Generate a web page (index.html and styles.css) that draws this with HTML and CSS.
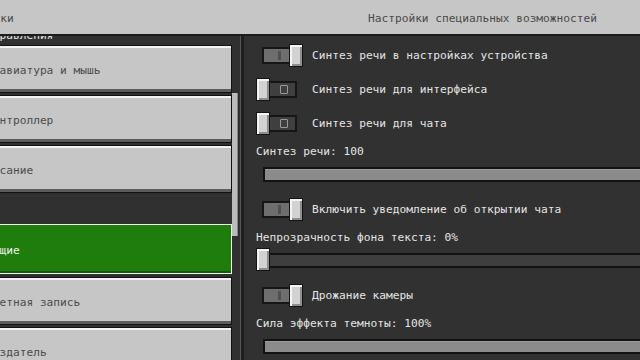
FILE: index.html
```html
<!DOCTYPE html>
<html lang="ru">
  <head>
    <meta charset="UTF-8" />
    <meta name="viewport" content="width=device-width, initial-scale=1.0" />
    <title>Настройки специальных возможностей</title>
    <link rel="stylesheet" href="styles.css">
  </head>
  <body>
    <div class="header">
      <span class="header-back">Настройки</span>
      <span class="header-title">Настройки специальных возможностей</span>
    </div>
    <div class="main">
      <div class="sidebar">
        <div class="side-list">
          <div class="side-label">Управления</div>
          <div class="side-btn">Клавиатура и мышь</div>
          <div class="side-btn">Контроллер</div>
          <div class="side-btn">Касание</div>
          <div class="side-gap"></div>
          <div class="side-btn selected">Общие</div>
          <div class="side-btn">Учетная запись</div>
          <div class="side-btn">Создатель</div>
        </div>
        <div class="scrollbar">
          <div class="scroll-thumb"></div>
        </div>
      </div>
      <div class="divider"></div>
      <div class="content">
        <div class="row">
          <div class="toggle on"><div class="track"></div><span class="mark"></span><div class="knob"></div></div>
          <span>Синтез речи в настройках устройства</span>
        </div>
        <div class="row">
          <div class="toggle off"><div class="track"></div><span class="mark"></span><div class="knob"></div></div>
          <span>Синтез речи для интерфейса</span>
        </div>
        <div class="row">
          <div class="toggle off"><div class="track"></div><span class="mark"></span><div class="knob"></div></div>
          <span>Синтез речи для чата</span>
        </div>
        <div class="label">Синтез речи: 100</div>
        <div class="slider full"><div class="slider-track"></div></div>

        <div class="row">
          <div class="toggle on"><div class="track"></div><span class="mark"></span><div class="knob"></div></div>
          <span>Включить уведомление об открытии чата</span>
        </div>
        <div class="label">Непрозрачность фона текста: 0%</div>
        <div class="slider empty"><div class="slider-track"></div><div class="knob"></div></div>

        <div class="row">
          <div class="toggle on"><div class="track"></div><span class="mark"></span><div class="knob"></div></div>
          <span>Дрожание камеры</span>
        </div>
        <div class="label">Сила эффекта темноты: 100%</div>
        <div class="slider full"><div class="slider-track"></div></div>
      </div>
    </div>
  </body>
</html>
```

FILE: styles.css
```css
* {
  margin: 0;
  padding: 0;
  box-sizing: border-box;
}
body {
  width: 640px;
  height: 360px;
  overflow: hidden;
  background-color: #313131;
  font-family: 'DejaVu Sans Mono', 'Liberation Mono', monospace;
  font-size: 11.2px;
  color: #e4e4e4;
}
.header {
  height: 36px;
  display: flex;
  align-items: center;
  padding-top: 2px;
  background-color: #c6c6c6;
  border-bottom: 2px solid #1c1c1c;
  color: #4a4a4a;
}
.header-back {
  margin-left: -47px;
}
.header-title {
  margin-left: auto;
  margin-right: 43px;
}
.main {
  display: flex;
  height: 324px;
  overflow: hidden;
}
.sidebar {
  display: flex;
  width: 270px;
  margin-left: -30px;
  padding-right: 2px;
  overflow: hidden;
  background-color: #303030;
}
.side-list {
  width: 262px;
}
.side-label {
  height: 14px;
  margin-top: -7px;
  margin-bottom: 2px;
  padding-left: 16px;
  line-height: 14px;
  color: #e8e8e8;
}
.side-btn {
  display: flex;
  align-items: center;
  height: 48px;
  margin-bottom: 2px;
  padding-left: 15px;
  padding-top: 2px;
  background-color: #c6c6c6;
  border: 1px solid #111;
  box-shadow: inset 0 2px 0 #f2f2f2, inset 0 -3px 0 #5c5c5c;
  color: #4c4c4c;
}
.side-gap {
  height: 29px;
}
.side-btn.selected {
  height: 50px;
  margin-bottom: 3px;
  background-color: #1f7d0c;
  border-color: #f4f4f4;
  box-shadow: inset 0 -2px 0 #125a06;
  color: #f2f2f2;
}
.scrollbar {
  width: 6px;
}
.scroll-thumb {
  height: 143px;
  margin-top: 57px;
  background-color: #bcbcbc;
  border-right: 1px solid #868686;
}
.divider {
  width: 4px;
  background-color: #1e1e1e;
  border-left: 1px solid #555;
}
.content {
  flex: 1;
  padding: 2px 0 0 12px;
  overflow: hidden;
  background-color: #313131;
}
.row {
  display: flex;
  align-items: center;
  height: 34px;
}
.toggle {
  position: relative;
  width: 47px;
  height: 23px;
  margin-right: 9px;
}
.track {
  position: absolute;
  left: 6px;
  right: 6px;
  top: 3px;
  bottom: 3px;
  border: 2px solid #161616;
}
.toggle.on .track {
  background-color: #6e6e6e;
}
.toggle.off .track {
  background-color: #3f3f3f;
}
.mark {
  position: absolute;
  top: 7px;
}
.toggle.on .mark {
  left: 22px;
  width: 3px;
  height: 9px;
  background-color: #505050;
}
.toggle.off .mark {
  left: 24px;
  width: 8px;
  height: 9px;
  border: 1px solid #9a9a9a;
  border-radius: 1px;
}
.knob {
  position: absolute;
  top: 0;
  width: 14px;
  height: 23px;
  background-color: #d2d2d2;
  border: 1px solid #141414;
  box-shadow: inset 2px 2px 0 #f4f4f4, inset -2px -2px 0 #8e8e8e;
}
.toggle.on .knob {
  right: 0;
}
.toggle.off .knob {
  left: 0;
}
.label {
  display: flex;
  align-items: center;
  height: 22px;
}
.slider {
  position: relative;
  display: flex;
  align-items: center;
  height: 24px;
  margin-bottom: 6px;
}
.slider-track {
  height: 15px;
  margin-left: 7px;
  margin-right: -10px;
  flex: 1;
  border: 2px solid #121212;
}
.slider.full .slider-track {
  background-color: #8b8b8b;
  box-shadow: inset 0 1px 0 #9c9c9c;
}
.slider.empty .slider-track {
  background-color: #3e3e3e;
}
.slider .knob {
  left: 0;
  top: 0;
}
```
